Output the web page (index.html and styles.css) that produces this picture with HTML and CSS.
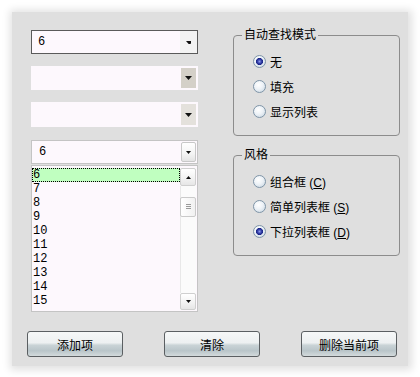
FILE: index.html
```html
<!DOCTYPE html>
<html lang="zh-CN">
  <head>
    <meta charset="UTF-8" />
    <title>组合框</title>
    <link rel="stylesheet" href="styles.css">
  </head>
  <body>
    <div class="window">
      <div class="top">
        <div class="left">
          <div class="combo combo-focus">
            <span class="value">6</span>
            <span class="drop drop-flat"><svg width="7" height="4"><path d="M0 0h7L3.5 4z" /></svg></span>
          </div>
          <div class="combo combo-plain">
            <span class="value"></span>
            <span class="drop drop-dark"><svg width="7" height="4"><path d="M0 0h7L3.5 4z" /></svg></span>
          </div>
          <div class="combo combo-plain combo-last">
            <span class="value"></span>
            <span class="drop drop-light"><svg width="7" height="4"><path d="M0 0h7L3.5 4z" /></svg></span>
          </div>

          <div class="combo combo-xp">
            <span class="value">6</span>
            <span class="drop drop-xp"><svg width="5" height="3"><path d="M0 0h5L2.5 3z" /></svg></span>
          </div>
          <div class="listbox">
            <ul class="items">
              <li class="selected">6</li>
              <li>7</li>
              <li>8</li>
              <li>9</li>
              <li>10</li>
              <li>11</li>
              <li>12</li>
              <li>13</li>
              <li>14</li>
              <li>15</li>
            </ul>
            <div class="scrollbar">
              <span class="sb-btn"><svg width="5" height="3"><path d="M2.5 0L5 3H0z" /></svg></span>
              <div class="track">
                <span class="thumb"><svg width="5" height="6"><path d="M0 0.5h5M0 2.5h5M0 4.5h5" stroke="#9a9a9a" /></svg></span>
              </div>
              <span class="sb-btn sb-down"><svg width="5" height="3"><path d="M0 0h5L2.5 3z" /></svg></span>
            </div>
          </div>
        </div>

        <div class="right">
          <fieldset class="group">
            <legend>自动查找模式</legend>
            <label class="radio-row"><span class="radio checked"></span><span>无</span></label>
            <label class="radio-row"><span class="radio"></span><span>填充</span></label>
            <label class="radio-row"><span class="radio"></span><span>显示列表</span></label>
          </fieldset>
          <fieldset class="group group-style">
            <legend>风格</legend>
            <label class="radio-row"><span class="radio"></span><span>组合框 (<u>C</u>)</span></label>
            <label class="radio-row"><span class="radio"></span><span>简单列表框 (<u>S</u>)</span></label>
            <label class="radio-row"><span class="radio checked"></span><span>下拉列表框 (<u>D</u>)</span></label>
          </fieldset>
        </div>
      </div>

      <div class="actions">
        <button>添加项</button>
        <button>清除</button>
        <button>删除当前项</button>
      </div>
    </div>
  </body>
</html>
```

FILE: styles.css
```css
body {
  margin: 0;
  background: #ffffff;
  font-family: "Liberation Sans", "Noto Sans CJK SC", sans-serif;
  font-size: 12px;
  color: #000;
}

.window {
  margin: 12px;
  width: 396px;
  height: 354px;
  box-sizing: border-box;
  padding: 15px 0 0 15px;
  background: #dfdfdf;
  box-shadow: 1px 1px 8px 3px rgba(0, 0, 0, 0.12);
}

.top {
  display: flex;
  align-items: flex-start;
}

/* left column: combo boxes */
.left {
  width: 167px;
  margin: 3px 0 0 4px;
}

.combo {
  height: 24px;
  box-sizing: border-box;
  display: flex;
  align-items: stretch;
  background: #fdf8fd;
  margin-bottom: 12px;
}

.combo .value {
  flex: 1;
  padding-left: 6px;
  line-height: 22px;
  font-family: "Liberation Mono", monospace;
  font-size: 12px;
}

.combo-focus {
  border: 1px solid #5a5a5a;
}

.combo-plain {
  padding: 2px;
}

.combo-last {
  height: 25px;
  margin-bottom: 13px;
}

.drop {
  width: 17px;
  display: flex;
  align-items: center;
  justify-content: center;
}

.drop svg {
  fill: #111;
}

.drop-flat {
  background: #f3f3f3;
}

.drop-flat svg {
  width: 5px;
  height: 3px;
}

.drop-dark {
  width: 15px;
  background: #d4d0c8;
}

.drop-light {
  width: 15px;
  background: #e4e1dc;
}

.combo-xp {
  border: 1px solid #c4c4c4;
  padding: 1px;
  margin-bottom: 1px;
}

.combo-xp .value {
  line-height: 20px;
}

.drop-xp {
  width: 15px;
  box-sizing: border-box;
  border: 1px solid #c8c8c8;
  border-radius: 2px;
  background: linear-gradient(#ffffff, #f4f4f4 60%, #e4e4e4);
}

/* list part of the drop down */
.listbox {
  height: 147px;
  box-sizing: border-box;
  border: 1px solid #c4c4c4;
  background: #fdf8fd;
  display: flex;
  padding: 2px 1px 1px 0;
}

.items {
  flex: 1;
  list-style: none;
  margin: 0;
  padding: 0;
  font-family: "Liberation Mono", monospace;
  font-size: 12px;
}

.items li {
  height: 14px;
  line-height: 14px;
  padding-left: 1px;
}

.items .selected {
  background: #c0ffc0;
  outline: 1px dotted #000;
  outline-offset: -1px;
}

.scrollbar {
  width: 16px;
  display: flex;
  flex-direction: column;
  background: #fbfbfb;
}

.sb-btn {
  height: 18px;
  box-sizing: border-box;
  border: 1px solid #cfcfcf;
  border-radius: 2px;
  background: linear-gradient(#ffffff, #f2f2f2 60%, #e6e6e6);
  display: flex;
  align-items: center;
  justify-content: center;
}

.sb-down {
  height: 17px;
}

.sb-btn svg {
  fill: #111;
}

.track {
  flex: 1;
  padding-top: 11px;
  border-left: 1px solid #e8e8e8;
}

.thumb {
  display: flex;
  align-items: center;
  justify-content: center;
  height: 20px;
  margin-left: -1px;
  box-sizing: border-box;
  border: 1px solid #cacaca;
  border-radius: 2px;
  background: linear-gradient(90deg, #ffffff, #f1f1f1);
}

/* right column: group boxes */
.right {
  width: 167px;
  margin-left: 35px;
}

.group {
  margin: 0 0 11px;
  height: 109px;
  box-sizing: border-box;
  padding: 6px 0 0 0;
  border: 1px solid #8c8c8c;
  border-radius: 4px;
  min-inline-size: 0;
}

.group legend {
  margin-left: 8px;
  padding: 0 2px;
  line-height: 16px;
}

.radio-row {
  display: flex;
  align-items: center;
  gap: 4px;
  height: 25px;
  padding-left: 19px;
}

.radio-row u {
  text-underline-offset: 1px;
}

.radio {
  width: 13px;
  height: 13px;
  box-sizing: border-box;
  border: 1px solid #7f95a8;
  border-radius: 50%;
  background: radial-gradient(circle at 40% 35%, #ffffff 0, #edf2f7 45%, #c3d2de 100%);
}

.radio.checked {
  background:
    radial-gradient(circle at 50% 50%, #8d98ee 0, #3340a8 2px, #1b2485 3.3px, transparent 3.8px),
    radial-gradient(circle at 40% 35%, #ffffff 0, #edf2f7 45%, #c3d2de 100%);
}

/* bottom buttons */
.actions {
  display: flex;
  gap: 41px;
  margin-top: 19px;
}

.actions button {
  width: 96px;
  height: 26px;
  border: 1px solid #5b5f62;
  border-radius: 3px;
  font-family: "Liberation Sans", "Noto Sans CJK SC", sans-serif;
  font-size: 12px;
  color: #000;
  padding: 0;
  background: linear-gradient(#f6f8f8 0%, #edf0f1 45%, #c9d3d6 55%, #b9c5c9 78%, #d3dadc 100%);
}
```
